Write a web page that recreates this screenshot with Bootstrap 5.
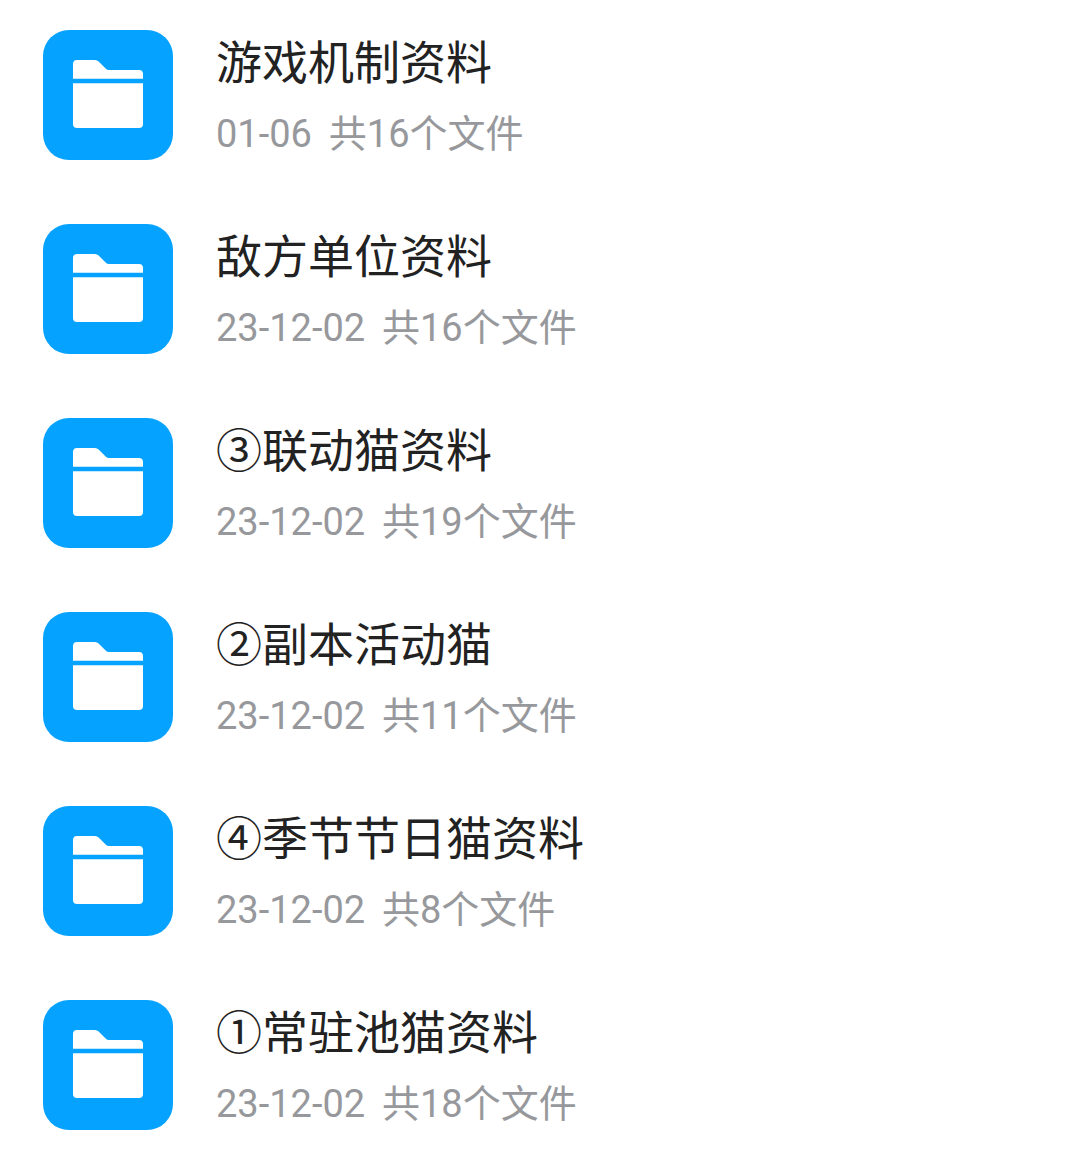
<!DOCTYPE html>
<html lang="zh-CN">
<head>
    <meta charset="UTF-8">
    <meta name="viewport" content="width=device-width, initial-scale=1.0">
    <title>文件夹列表</title>
    <link href="https://cdn.jsdelivr.net/npm/bootstrap@5.3.3/dist/css/bootstrap.min.css" rel="stylesheet">
    <style>
        body { background-color: #fff; font-family: Roboto, "Noto Sans CJK SC", sans-serif; }
        .folder-list { padding: 30px 0 0 43px; gap: 64px; }
        .folder-icon { width: 130px; height: 130px; border-radius: 26px; background-color: #05a2ff; flex-shrink: 0; }
        .folder-text { margin-left: 43px; }
        .folder-name { font-size: 46px; line-height: 64px; color: #222; margin-top: 1px; }
        .folder-meta { font-size: 38px; line-height: 50px; color: #97989c; margin-top: 14px; white-space: pre; word-spacing: -1px; }
    </style>
</head>
<body>
    <div id="folder-list" class="folder-list d-flex flex-column"></div>

    <script>
        const folders = [
            { name: '游戏机制资料', date: '01-06', count: 16 },
            { name: '敌方单位资料', date: '23-12-02', count: 16 },
            { name: '③联动猫资料', date: '23-12-02', count: 19 },
            { name: '②副本活动猫', date: '23-12-02', count: 11 },
            { name: '④季节节日猫资料', date: '23-12-02', count: 8 },
            { name: '①常驻池猫资料', date: '23-12-02', count: 18 }
        ];
        const icon = `<svg width="130" height="130" viewBox="0 0 130 130">
            <path fill="#fff" d="M30 34a4 4 0 0 1 4-4h18a5 5 0 0 1 3.6 1.500l7 7a5 5 0 0 0 3.600 1.500H96a4 4 0 0 1 4 4v4.700H30z"/>
            <path fill="#fff" d="M30 53.300h70V94a4 4 0 0 1-4 4H34a4 4 0 0 1-4-4z"/>
        </svg>`;
        const list = document.getElementById('folder-list');
        folders.forEach(f => {
            list.innerHTML += `<div class="d-flex align-items-start">
                <div class="folder-icon">${icon}</div>
                <div class="folder-text">
                    <div class="folder-name">${f.name}</div>
                    <div class="folder-meta">${f.date}  共${f.count}个文件</div>
                </div>
            </div>`;
        });
    </script>
    <script src="https://cdn.jsdelivr.net/npm/bootstrap@5.3.3/dist/js/bootstrap.bundle.min.js"></script>
</body>
</html>
